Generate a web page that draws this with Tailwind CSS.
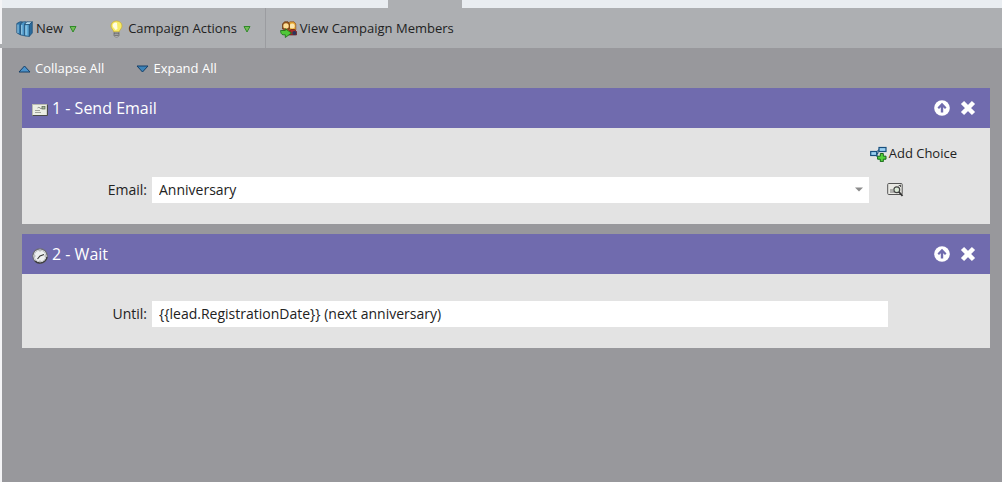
<!DOCTYPE html>
<html lang="en">
<head>
  <meta charset="UTF-8" />
  <meta name="viewport" content="width=device-width, initial-scale=1.0" />
  <title>Campaign Flow</title>
  <script src="https://cdn.jsdelivr.net/npm/@tailwindcss/browser@4"></script>
</head>
<body class="bg-[#98989c] min-h-screen flex font-['Open_Sans','Noto_Sans',sans-serif] text-[13px] text-[#222]">

  <!-- Left splitter -->
  <div class="w-0.5 shrink-0 bg-[#f4f4f6] pt-11">
    <div class="h-1 bg-[#a9abae]"></div>
  </div>

  <div class="flex-1 min-w-0">
    <!-- Tab strip -->
    <div class="h-2 bg-[#e9edf1] flex">
      <div class="ml-[386px] w-[74px] bg-[#adafb2]"></div>
    </div>

    <!-- Toolbar -->
    <div class="h-10 bg-[#adafb2] flex items-stretch">
      <button class="ml-[14px] pt-0.5 flex items-center gap-[3px]">
        <svg class="w-[17px] h-4" viewBox="0 0 17 16">
          <path d="M.8 2.500 4 .8H6.500L4.500 2.500V14L.8 11.800z" fill="#2f76aa" stroke="#1c4d75" stroke-width=".7" />
          <path d="M4.800 2.800 7.500.8H10.500L8.500 3V14.800L4.800 14z" fill="#4c95c6" stroke="#1c4d75" stroke-width=".7" />
          <path d="M8.800 3.200 11 .8H16.300L13.500 3.500H8.800z" fill="#b5dcf0" stroke="#1c4d75" stroke-width=".7" />
          <path d="M8.800 3.500H13.300V15.400L8.800 15z" fill="#5ea9d6" stroke="#1c4d75" stroke-width=".7" />
          <path d="M13.300 3.500 16.300.8V12L13.300 15.400z" fill="#2b6b9d" stroke="#1c4d75" stroke-width=".7" />
          <path d="M5.800 4V13.500M2 3.500V12M10 4.500V14" stroke="#a5d7f0" stroke-width="1" />
        </svg>
        <span>New</span>
        <svg class="ml-[3px] w-2 h-2" viewBox="0 0 8 8"><path d="M1 1.500H7L4 7z" fill="#74bd58" stroke="#2f8a28" stroke-linejoin="round" /></svg>
      </button>

      <button class="ml-[31px] pt-0.5 flex items-center gap-[3px]">
        <svg class="w-[17px] h-[18px]" viewBox="0 0 17 18">
          <path d="M8.500 1C5 1 3 3.300 3 6c0 2.600 2.500 3.800 2.800 6h5.400C11.500 9.800 14 8.600 14 6 14 3.300 12 1 8.500 1z" fill="#f7ec68" stroke="#c5a72f" stroke-width=".7" />
          <path d="M8 2.500C6 2.600 4.500 4 4.700 6 5 7.500 6.200 8 7.500 10L9.500 9 9 3z" fill="#fffde0" />
          <path d="M6 12.300h5v3.200L9.700 17H7.300L6 15.500z" fill="#d6d6d6" stroke="#666" stroke-width=".7" />
          <path d="M6 13.800h5M6.300 15.300h4.400" stroke="#444" stroke-width=".8" />
        </svg>
        <span>Campaign Actions</span>
        <svg class="ml-[3px] w-2 h-2" viewBox="0 0 8 8"><path d="M1 1.500H7L4 7z" fill="#74bd58" stroke="#2f8a28" stroke-linejoin="round" /></svg>
      </button>

      <div class="ml-[14px] w-px bg-[#9b9ca0]"></div>

      <button class="ml-[14px] pt-0.5 flex items-center gap-[3px]">
        <svg class="w-[17px] h-[17px]" viewBox="0 0 17 17">
          <path d="M8.500 7V2L10 .8H14L15.800 3V9H9z" fill="#e9aa32" stroke="#8b4c1d" stroke-width=".7" />
          <circle cx="12.200" cy="5" r="2.500" fill="#fce6ae" />
          <path d="M8.500 14V10L11 8.500H14.500L16.500 10.500V14z" fill="#a72b25" stroke="#581614" stroke-width=".6" />
          <circle cx="14.300" cy="12" r="2" fill="#27355f" />
          <path d="M2.500 8V3L4.500 .8H8L9.500 3V8z" fill="#9a5a20" stroke="#63350f" stroke-width=".7" />
          <circle cx="6" cy="5" r="2.700" fill="#fddf97" />
          <path d="M2 12C2 9 3.500 8.200 6 8.200S10.500 9 10.500 12z" fill="#e0502f" stroke="#732012" stroke-width=".6" />
          <path d="M.6 9.500H5.300V7.800L11.500 12 5.300 16.500V13.800H3C1.500 13.500.6 12 .6 9.500z" fill="#50c838" stroke="#176f18" stroke-width=".8" />
        </svg>
        <span>View Campaign Members</span>
      </button>
    </div>

    <!-- Collapse / expand -->
    <div class="h-10 pt-0.5 px-4 flex items-center gap-8 text-white">
      <button class="flex items-center gap-1">
        <svg class="w-[13px] h-2" viewBox="0 0 13 8"><path d="M6.500 1 12 7H1z" fill="#4c93cb" stroke="#153f68" stroke-linejoin="round" /></svg>
        <span>Collapse All</span>
      </button>
      <button class="flex items-center gap-1">
        <svg class="w-[13px] h-2" viewBox="0 0 13 8"><path d="M1 1H12L6.500 7z" fill="#3c83b8" stroke="#153f68" stroke-linejoin="round" /></svg>
        <span>Expand All</span>
      </button>
    </div>

    <main class="pl-5 pr-3 space-y-2.5">
      <!-- Step 1 -->
      <section class="bg-[#e3e3e3]">
        <header class="h-10 bg-[#706bae] text-white flex items-center pl-2.5 pr-3.5">
          <svg class="mt-1 w-4 h-3" viewBox="0 0 16 12">
            <rect x=".5" y=".5" width="14.500" height="11" fill="#eceee4" stroke="#b9bbb0" />
            <path d="M.5 11.500H15.500V.5" fill="none" stroke="#4a4a4a" />
            <path d="M3 6.500h5M3 8.500h6" stroke="#a2a49c" />
            <rect x="10" y="2.500" width="3" height="2.500" fill="#a5b39b" stroke="#56654f" stroke-width=".7" />
            <path d="M5.500 4q1.500-1.500 2.500 0t2 0" fill="none" stroke="#777" stroke-width=".8" />
          </svg>
          <h2 class="ml-1 flex-1 text-base">1 - Send Email</h2>
          <button aria-label="Move up">
            <svg class="w-4 h-4" viewBox="0 0 16 16"><circle cx="8" cy="8" r="7.800" fill="#fff" /><path d="M8 2.800 12.500 7.500 11 9 9.200 7.300V12.500H6.800V7.300L5 9 3.500 7.500z" fill="#706bae" /></svg>
          </button>
          <button class="ml-2.5" aria-label="Remove step">
            <svg class="w-4 h-4" viewBox="0 0 16 16"><path d="M2.500 2.500 13.500 13.500M13.500 2.500 2.500 13.500" stroke="#fff" stroke-width="4.500" /></svg>
          </button>
        </header>
        <div class="pt-4 pb-[21px]">
          <div class="flex justify-end pr-[33px]">
            <button class="flex items-center gap-0.5">
              <svg class="w-[17px] h-4" viewBox="0 0 17 16">
                <path d="M6 7.500H8V4H9.500M7 7.500V11" fill="none" stroke="#174f7e" />
                <rect x=".7" y="5.500" width="6" height="4" fill="#9bd0f2" stroke="#174f7e" stroke-width="1.200" />
                <rect x="9" y="1.500" width="7" height="4" fill="#9bd0f2" stroke="#174f7e" stroke-width="1.200" />
                <path d="M10.300 7.500h3v2.700H16v3h-2.700v2.500h-3v-2.500H7.600v-3h2.700z" fill="#55d43b" stroke="#17651a" />
              </svg>
              <span>Add Choice</span>
            </button>
          </div>
          <div class="mt-[13px] flex items-center text-sm">
            <label for="email" class="w-[125px] text-right">Email:</label>
            <div class="ml-[5px] flex-1 relative">
              <select id="email" class="block w-full h-[26px] pl-[7px] bg-white text-[#222] appearance-none">
                <option>Anniversary</option>
              </select>
              <svg class="absolute right-1.5 top-2.5 w-2 h-[5px] pointer-events-none" viewBox="0 0 10 5"><path d="M0 0H10L5 5z" fill="#8b8b8b" /></svg>
            </div>
            <button class="ml-[18px] mr-[86px]" aria-label="Preview email">
              <svg class="block w-[17px] h-[15px]" viewBox="0 0 17 15">
                <rect x=".7" y="1.500" width="14.500" height="11" rx="1" fill="#e9e9e4" stroke="#555" />
                <path d="M3 8h3M3 10h4" stroke="#777" />
                <path d="M11.500 4 13.500 3V5" fill="none" stroke="#555" />
                <circle cx="9.800" cy="7.800" r="2.900" fill="#dcebd8" stroke="#444" stroke-width="1.200" />
                <path d="M12 10 15.500 13.800" stroke="#333" stroke-width="1.800" />
              </svg>
            </button>
          </div>
        </div>
      </section>

      <!-- Step 2 -->
      <section class="bg-[#e3e3e3]">
        <header class="h-10 bg-[#706bae] text-white flex items-center pl-2.5 pr-3.5">
          <svg class="mt-1 w-4 h-4" viewBox="0 0 16 16">
            <circle cx="8" cy="8" r="7.200" fill="#eef0f0" stroke="#6a6a70" stroke-width="1.200" />
            <path d="M3 13A7.200 7.200 0 0 0 15 9" fill="none" stroke="#3c3c40" stroke-width="1.400" />
            <circle cx="8" cy="8" r="5.800" fill="none" stroke="#c6c8ca" />
            <path d="M12 6.500 8 8 5.500 11" fill="none" stroke="#333" stroke-width="1.100" />
            <path d="M8 2.500v1M8 12.500v1M2.500 8h1M12.500 8h1" stroke="#777" stroke-width=".8" />
          </svg>
          <h2 class="ml-1 flex-1 text-base">2 - Wait</h2>
          <button aria-label="Move up">
            <svg class="w-4 h-4" viewBox="0 0 16 16"><circle cx="8" cy="8" r="7.800" fill="#fff" /><path d="M8 2.800 12.500 7.500 11 9 9.200 7.300V12.500H6.800V7.300L5 9 3.500 7.500z" fill="#706bae" /></svg>
          </button>
          <button class="ml-2.5" aria-label="Remove step">
            <svg class="w-4 h-4" viewBox="0 0 16 16"><path d="M2.500 2.500 13.500 13.500M13.500 2.500 2.500 13.500" stroke="#fff" stroke-width="4.500" /></svg>
          </button>
        </header>
        <div class="pt-[27px] pb-[21px] flex items-center text-sm">
          <label for="until" class="w-[125px] text-right">Until:</label>
          <input id="until" type="text" value="{{lead.RegistrationDate}} (next anniversary)" class="ml-[5px] mr-[102px] flex-1 h-[26px] px-[7px] bg-white text-[#222]" />
        </div>
      </section>
    </main>
  </div>

</body>
</html>
